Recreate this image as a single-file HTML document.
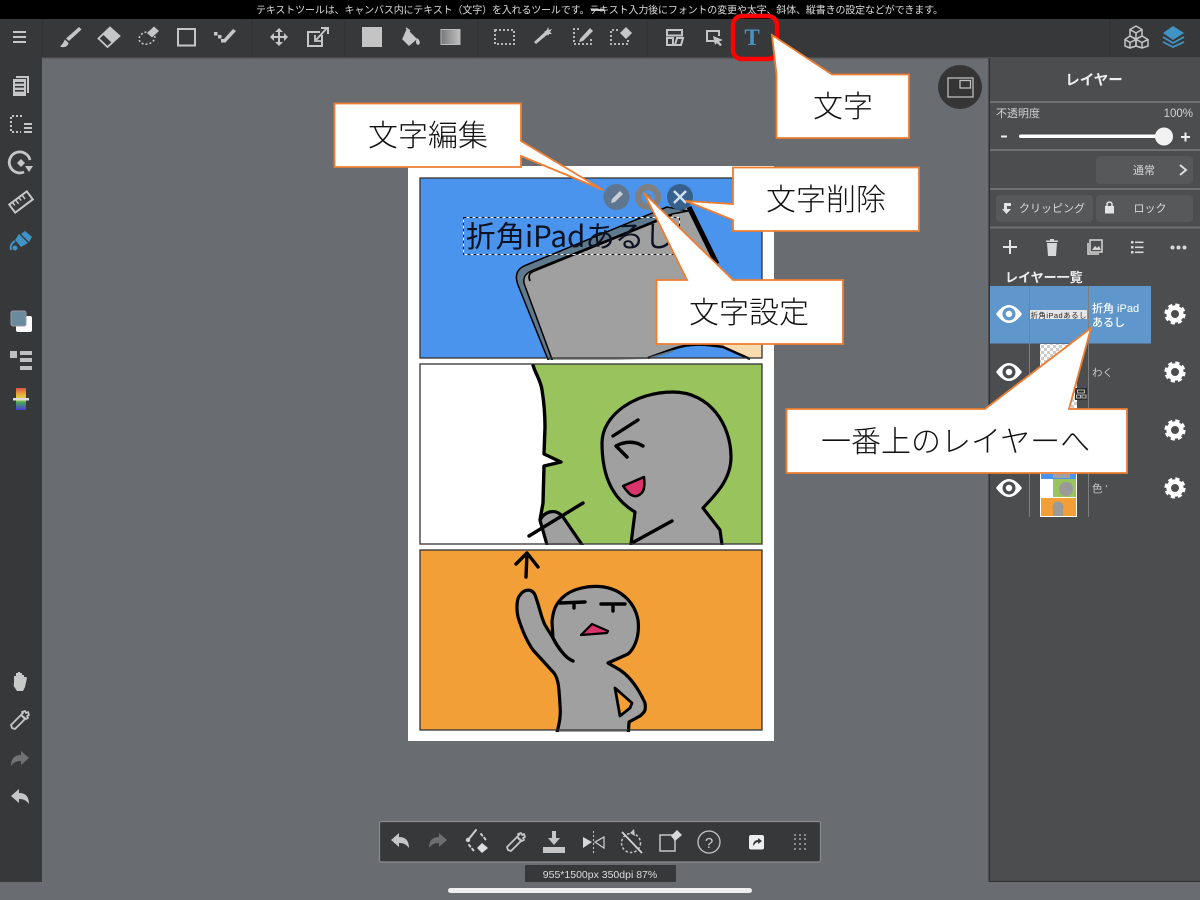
<!DOCTYPE html>
<html lang="ja"><head><meta charset="utf-8"><title>Text tool</title>
<style>
html,body{margin:0;padding:0;background:#696c71;width:1200px;height:900px;overflow:hidden}
svg{display:block;font-family:"Liberation Sans","Noto Sans CJK JP",sans-serif}
.co{fill:#fff;stroke:#ed7d31;stroke-width:1.8;stroke-linejoin:miter}
.cot{font-family:"Noto Sans CJK JP",sans-serif;font-size:30px;font-weight:300;fill:#111}
.i{fill:none;stroke:#c6c6c6;stroke-width:2}
.f{fill:#c6c6c6}
.ink{fill:none;stroke:#000;stroke-width:3.4;stroke-linecap:round;stroke-linejoin:round}
.fg{fill:#a0a0a0;stroke:#000;stroke-width:3.2;stroke-linejoin:round;stroke-linecap:round}
.sep{stroke:#6f7072;stroke-width:2}
.pt{fill:#d8d8d8;font-size:11px}
</style></head><body>
<svg width="1200" height="900" viewBox="0 0 1200 900" xmlns="http://www.w3.org/2000/svg">
<defs>
<g id="eye"><path d="M-13 0Q0-18 13 0Q0 18-13 0Z" fill="#fff"/><circle r="6.5" fill="currentColor"/><circle r="3.2" fill="#fff"/></g>
<g id="gear"><circle r="6.3" fill="none" stroke="#fff" stroke-width="4.6"/><circle r="9" fill="none" stroke="#fff" stroke-width="3.2" stroke-dasharray="4.07 3"/></g>
<path id="undo" d="M-9-1L-1-8V-4C6-4 9 0 9 7C6 3 3 2-1 2V6Z"/>
<path id="drop" d="M-8 8L-9 5L1-5L5-1L-5 9ZM1-5L3-7L2-8L5-9L6-7L8-8L9-5L7-4L8-2L6-1Z" fill="none" stroke-width="1.8" stroke-linejoin="round"/>
<clipPath id="p1"><rect x="420" y="178" width="342" height="182"/></clipPath>
<clipPath id="p2"><rect x="420" y="364" width="342" height="181"/></clipPath>
<clipPath id="p3"><rect x="420" y="550" width="342" height="182"/></clipPath>
</defs>

<rect width="1200" height="900" fill="#696c71"/>
<!-- top -->
<rect width="1200" height="19" fill="#000"/>
<text x="256" y="13.5" font-size="10" fill="#dcdcdc" textLength="687" lengthAdjust="spacing" font-family="'Noto Sans CJK JP',sans-serif">テキストツールは、キャンバス内にテキスト（文字）を入れるツールです。テキスト入力後にフォントの変更や太字、斜体、縦書きの設定などができます。</text>
<line x1="591" y1="10" x2="604" y2="10" stroke="#ccc" stroke-width="2"/>
<rect y="19" width="1200" height="39" fill="#37383a"/>
<rect y="57" width="1200" height="1.500" fill="#4a4b4d"/>
<rect y="19" width="42" height="863" fill="#37383a"/>
<rect x="42" y="19" width="0.800" height="38" fill="#303133"/>
<g stroke="#303133"><line x1="252" y1="19" x2="252" y2="57"/><line x1="345" y1="19" x2="345" y2="57"/><line x1="478" y1="19" x2="478" y2="57"/><line x1="647" y1="19" x2="647" y2="57"/><line x1="1110" y1="19" x2="1110" y2="57"/></g>

<!-- toolbar icons -->
<g fill="#c6c6c6" stroke="none">
<rect x="13" y="31" width="13" height="2"/><rect x="13" y="36" width="13" height="2"/><rect x="13" y="41" width="13" height="2"/>
<path d="M79 27L81.500 29.500L69 41L66 38.500Z"/><path d="M65 39.500L68.500 43C68 47 63 48 60 46.500C62 45 63 43 65 39.500Z"/>
</g>
<path d="M110 27.500L119.500 36L107.500 47L98.500 38.500Z" fill="none" stroke="#c6c6c6" stroke-width="1.800"/>
<path d="M110 27.500L119.500 36L112 43L103 34.500Z" fill="#c6c6c6"/>
<g fill="none" stroke="#c6c6c6" stroke-width="1.600">
<ellipse cx="147" cy="38" rx="8" ry="6" stroke-dasharray="2 2" transform="rotate(-15 147 38)"/>
<rect x="178" y="29" width="17" height="16.500" stroke-width="2"/>
</g>
<path d="M147 33L154 26.500L159 31L152 37.500Z" fill="#c6c6c6"/>
<g fill="#c6c6c6">
<rect x="214" y="32" width="3.500" height="3.500"/><rect x="218" y="35" width="3.500" height="3.500"/><rect x="221" y="39" width="3.500" height="3.500"/>
<path d="M225 43L223 40L233 29L236 31Z"/>
<path d="M279 28L283 32H280V36H284V33L288 37L284 41V38H280V42H283L279 46L275 42H278V38H274V41L270 37L274 33V36H278V32H275Z"/>
</g>
<g fill="none" stroke="#c6c6c6" stroke-width="2">
<path d="M320 32H308V46H322V35"/><path d="M316 40L327 28M321 28H328V34"/><path d="M315 35V41H321" stroke-width="1.800"/>
</g>
<rect x="362" y="27" width="20" height="20" fill="#c4c4c4"/>
<path d="M407 30L416 39L409 45L403 39ZM406 28L410 31" fill="#c6c6c6" stroke="#c6c6c6" stroke-width="1.500" stroke-linejoin="round"/>
<path d="M417 38C420 40 421 44 418 45C415 44 416 40 417 38Z" fill="#c6c6c6"/>
<defs><linearGradient id="gr"><stop offset="0" stop-color="#777"/><stop offset="1" stop-color="#c0c0c0"/></linearGradient></defs>
<rect x="441" y="29.500" width="19" height="15" fill="url(#gr)" stroke="#bbb"/>
<g fill="none" stroke="#c6c6c6" stroke-width="1.800" stroke-dasharray="2 2">
<rect x="495" y="30" width="19" height="14"/>
<path d="M579 29H574V44H591V38"/>
<path d="M618 30H611V44H628V40"/>
</g>
<g fill="#c6c6c6">
<path d="M536 44L534 42L546 31L548 34Z"/>
<path d="M548 27L549 30L552 29L550 32L552 34L549 34L548 36L547 33L544 32L547 30Z"/>
<path d="M580 39L590 28L593 31L583 41L579 42Z"/>
<path d="M620 33L626 27L632 33L626 39Z"/>
</g>
<g fill="none" stroke="#c6c6c6" stroke-width="2">
<rect x="667" y="30" width="15" height="5.500"/><path d="M667 38H673V45H667ZM677 38H683L681 45H675Z"/>
<path d="M719 41H707V31H719V36"/>
</g>
<path d="M713 36L723 40L719 41.500L722 45L720 46L717 43L715 45Z" fill="#c6c6c6"/>
<text x="752" y="45" text-anchor="middle" font-family="'Liberation Serif',serif" font-weight="bold" font-size="23" fill="#4a92c0">T</text>
<rect x="733" y="16" width="44" height="43" rx="9" fill="none" stroke="#f00" stroke-width="4.500"/>

<g fill="none" stroke="#c6c6c6" stroke-width="1.500" stroke-linejoin="round">
<path d="M1136 26L1142 29.500V36L1136 39L1130 36V29.500ZM1130 29.500L1136 33L1142 29.500M1136 33V39"/>
<path d="M1130 36L1136 39.500V46L1130 48L1125 46V39.500ZM1125 39.500L1130 42.500L1136 39.500M1130 42.500V48"/>
<path d="M1142 36L1148 39.500V46L1142 48L1136 46V39.500ZM1136 39.500L1142 42.500L1148 39.500M1142 42.500V48"/>
</g>
<path d="M1173 26L1184 33L1173 40L1163 33Z" fill="#3f94c5"/>
<path d="M1163 37L1173 43L1184 37M1163 42L1173 47L1184 42" fill="none" stroke="#3f94c5" stroke-width="1.800"/>

<!-- left icons -->
<g fill="#c6c6c6">
<rect x="13" y="79" width="13" height="17"/>
<path d="M16 76H29V93H27V78H16Z"/>
<rect x="15" y="82" width="9" height="1.600" fill="#37383a"/><rect x="15" y="86" width="9" height="1.600" fill="#37383a"/><rect x="15" y="90" width="9" height="1.600" fill="#37383a"/>
<rect x="24" y="123" width="8" height="2"/><rect x="24" y="127" width="8" height="2"/><rect x="24" y="131" width="8" height="2"/>
</g>
<path d="M22 116H11V132H21" fill="none" stroke="#c6c6c6" stroke-width="2" stroke-dasharray="2 2"/>
<path d="M24 172A10.500 10.500 0 1 1 30 160" fill="none" stroke="#c6c6c6" stroke-width="2.800"/>
<path d="M25 166H33L29 172Z" fill="#c6c6c6"/>
<path d="M21 155L25 159L21 163L17 159Z" transform="translate(0,4)" fill="#c6c6c6"/>
<g transform="rotate(-37 21 202)"><rect x="10" y="197" width="22" height="10" fill="none" stroke="#c6c6c6" stroke-width="2"/><path d="M14 197V201M18 197V202M22 197V201M26 197V202" stroke="#c6c6c6" stroke-width="1.500"/></g>
<path d="M19 234L28 243L21 247L15 240ZM25 231L32 237L29 242L21 234Z" fill="#3f94c5"/>
<path d="M15 241C12 243 10 245 11 250" fill="none" stroke="#3f94c5" stroke-width="2"/>
<circle cx="15" cy="248" r="2.500" fill="#3f94c5"/>
<rect x="16" y="316" width="16" height="16" rx="2" fill="#fff"/>
<rect x="11" y="311" width="15" height="15" rx="2" fill="#6a8a9e" stroke="#99a" stroke-width="1"/>
<g fill="#c0c0c0"><rect x="10" y="351" width="7" height="7"/><rect x="20" y="351" width="12" height="4"/><rect x="20" y="358" width="12" height="4"/><rect x="20" y="366" width="12" height="4"/></g>
<defs><linearGradient id="rb" x1="0" x2="0" y1="0" y2="1"><stop offset="0" stop-color="#d8534a"/><stop offset=".25" stop-color="#e8a23a"/><stop offset=".5" stop-color="#d8d84a"/><stop offset=".65" stop-color="#4aa85a"/><stop offset="1" stop-color="#4a3ad8"/></linearGradient></defs>
<rect x="16" y="388" width="10" height="22" fill="url(#rb)"/>
<rect x="13" y="398" width="16" height="2.500" fill="#ddd"/>
<path d="M11 682L14 686V676H16V673H18V672H20V673H22V675H24V677H26L27 678L25 687L23 691H17Z" fill="#c9c9c9"/>
<use href="#drop" x="20" y="720" stroke="#c6c6c6"/>
<use href="#undo" transform="translate(20 759) scale(-1 1)" fill="#707173"/>
<use href="#undo" x="20" y="797" fill="#c6c6c6"/>

<!-- page -->
<rect x="408" y="166" width="366" height="575" fill="#fff"/>
<!-- panel 1 -->
<rect x="420" y="178" width="342" height="180" fill="#4a94ee"/>
<g clip-path="url(#p1)">
<path d="M720 345L726 330L762 335V358H745Z" fill="#f8dcb0"/>
<path d="M552 362L519 286C516 277 519 270 526 267L667 209L688 207L699 228L717 263L735 320L723 347C705 344 685 345 673 349L648 359Z" fill="#a0a0a0"/>
<path d="M553 362L525 286C522 279 525 274 531 271L672 214L688 211L667 207L524 266C516 270 515 277 518 285L549 362Z" fill="#5f7a8c" stroke="#000" stroke-width="1.500" stroke-linejoin="round"/>
<path d="M530 281C528 276 529 273 534 271L672 215" fill="none" stroke="#000" stroke-width="1.800"/>
<path d="M689 207L717 264" fill="none" stroke="#000" stroke-width="5"/>
<path d="M648 358L673 349C690 343 705 344 723 347L750 359" fill="none" stroke="#000" stroke-width="2.500"/>
<path d="M650 358L673 351" stroke="#5f7a8c" stroke-width="2"/>
</g>
<rect x="420" y="178" width="342" height="180" fill="none" stroke="#333" stroke-width="1.300"/>
<text x="466" y="247" font-size="29.500" fill="#0c1222" font-family="'Noto Sans CJK JP',sans-serif" font-weight="400">折角iPadあるし</text>
<rect x="463.500" y="217.500" width="216" height="37" fill="none" stroke="#fff"/>
<rect x="463.500" y="217.500" width="216" height="37" fill="none" stroke="#111" stroke-dasharray="3 3"/>
<circle cx="616.500" cy="197" r="13" fill="#5f7690"/>
<path d="M611 203L612 199L620 191L623 194L615 202Z" fill="#c9ced5"/>
<circle cx="648" cy="197" r="13" fill="#808080"/>
<circle cx="648" cy="197" r="5" fill="none" stroke="#4a94ee" stroke-width="3.500"/>
<circle cx="680" cy="197" r="13" fill="#38608c"/>
<path d="M674 191L686 203M686 191L674 203" stroke="#cfe0f0" stroke-width="2.500"/>

<!-- panel 2 -->
<rect x="420" y="364" width="342" height="180" fill="#98c35d"/>
<path d="M420 364H533C535 373 541 381 542 390C544 402 545 415 545 427L544 454L561 462L544 466L543 503L540 520L547 544H420Z" fill="#fff"/>
<g clip-path="url(#p2)">
<path class="ink" d="M533 365C535 373 541 381 542 390C544 402 545 415 545 427L544 454L561 462L544 466L543 503L540 520L547 543"/>
<path class="fg" d="M723 552L720 530L703 508C715 495 731 480 731 457C731 425 710 392 673 392C635 392 602 415 602 443C602 480 615 500 635 512L630 552Z"/>
<path class="fg" d="M549 552L540 520C545 511 556 508 563 517L587 552Z"/>
<path class="ink" d="M529 536L583 503M613 436L638 420M643 446C635 441 625 441 616 446L627 457M632 543L672 521" stroke-width="3"/>
<path d="M623 486L644 477C645 486 645 493 637 496C630 497 627 491 623 486Z" fill="#d8336a" stroke="#000" stroke-width="2.500" stroke-linejoin="round"/>
</g>
<rect x="420" y="364" width="342" height="180" fill="none" stroke="#333" stroke-width="1.300"/>

<!-- panel 3 -->
<rect x="420" y="550" width="342" height="180" fill="#f39f37"/>
<g clip-path="url(#p3)">
<path class="fg" d="M555 740C560 722 561 715 560 705C559 690 559 680 554 673L533 650C526 640 522 630 518 617C516 608 517 598 520 595C524 589 532 588 535 595C539 605 541 617 545 625L553 638L552 622C553 610 556 604 562 598C572 588 590 585 604 587C622 590 635 603 638 620C640 635 635 648 628 654L608 663L620 670C632 678 640 692 645 703C646 710 645 712 640 716L629 722L628 740Z"/>
</g>
<path class="ink" d="M526 577L527 553M516 564L527 553L538 567M553 638C557 646 565 658 573 661" stroke-width="3"/>
<path d="M615 688L632 703L630 708L620 716Z" fill="#f39f37" stroke="#000" stroke-width="2.800" stroke-linejoin="round"/>
<path class="ink" d="M560 603L585 602M574 603V608M601 604L625 604M613 605V611" stroke-width="2.500"/>
<path d="M581 635L592 624L608 631L607 633Z" fill="#d8336a" stroke="#000" stroke-width="2.200" stroke-linejoin="round"/>
<rect x="420" y="550" width="342" height="180" fill="none" stroke="#333" stroke-width="1.300"/>

<!-- nav -->
<circle cx="960" cy="87" r="22" fill="#353535"/>
<rect x="948" y="78" width="25" height="19" fill="none" stroke="#bdbdbd" stroke-width="1.300"/>
<rect x="960" y="80.500" width="10.500" height="7.500" fill="none" stroke="#bdbdbd" stroke-width="1.300"/>

<!-- right panel -->
<rect x="989" y="58" width="211" height="824" fill="#4c4d4f"/>
<rect x="988.500" y="58" width="1.500" height="824" fill="#2f3032"/>
<rect x="989" y="881" width="211" height="1" fill="#2f3032"/>
<text x="1094" y="85" text-anchor="middle" font-size="14.500" font-weight="bold" fill="#eee">レイヤー</text>
<g class="sep"><line x1="990" y1="102" x2="1200" y2="102"/><line x1="990" y1="150" x2="1200" y2="150"/><line x1="990" y1="189" x2="1200" y2="189"/><line x1="990" y1="227.500" x2="1200" y2="227.500"/></g>
<text x="996" y="117" font-size="11" fill="#d2d2d2">不透明度</text>
<text x="1193" y="117" text-anchor="end" font-size="11.500" fill="#d2d2d2">100%</text>
<rect x="1019" y="134.500" width="146" height="3.500" rx="1.700" fill="#fff"/>
<circle cx="1164" cy="136.500" r="9" fill="#f2f2f2"/>
<rect x="1001" y="135.500" width="6" height="2" fill="#eee"/>
<path d="M1181 137H1190M1185.500 132.500V141.500" stroke="#eee" stroke-width="2"/>
<rect x="1096" y="156" width="97" height="28" rx="4" fill="#575859"/>
<text x="1144" y="174" text-anchor="middle" class="pt" font-size="11">通常</text>
<path d="M1180 165L1186 170L1180 175" fill="none" stroke="#ddd" stroke-width="2"/>
<rect x="996" y="195" width="97" height="27" rx="4" fill="#575859"/>
<rect x="1096" y="195" width="97" height="27" rx="4" fill="#575859"/>
<path d="M1004 203H1011V206H1007V209H1011L1006.500 214L1002 209H1004Z" fill="#e4e4e4"/>
<text x="1019" y="212" font-size="11" fill="#d8d8d8">クリッピング</text>
<rect x="1105" y="206" width="9" height="7.500" fill="#e4e4e4"/>
<path d="M1107 206V204C1107 201.500 1112 201.500 1112 204V206" fill="none" stroke="#e4e4e4" stroke-width="1.500"/>
<text x="1150" y="212" text-anchor="middle" font-size="11" fill="#d8d8d8">ロック</text>

<path d="M1003 247H1017M1010 240V254" stroke="#e6e6e6" stroke-width="2"/>
<path d="M1047 243H1057L1056 256H1048Z M1046 240.500H1058V242H1046Z M1050 239H1054V240.500H1050Z" fill="#d8d8d8"/>
<g fill="none" stroke="#d8d8d8" stroke-width="1.500"><rect x="1090" y="240" width="12" height="12"/><path d="M1088 243V254H1099"/></g>
<path d="M1092 250L1095 246L1097 248L1099 246L1101 250Z" fill="#d8d8d8"/>
<g fill="#d8d8d8"><rect x="1131" y="241" width="2.500" height="2.500"/><rect x="1131" y="246" width="2.500" height="2.500"/><rect x="1131" y="251" width="2.500" height="2.500"/><rect x="1135" y="241.500" width="8.500" height="1.600"/><rect x="1135" y="246.500" width="8.500" height="1.600"/><rect x="1135" y="251.500" width="8.500" height="1.600"/>
<circle cx="1172.500" cy="247.500" r="2"/><circle cx="1178.500" cy="247.500" r="2"/><circle cx="1184.500" cy="247.500" r="2"/></g>
<text x="1005" y="282" font-size="13" font-weight="bold" fill="#eee">レイヤー一覧</text>

<!-- layers -->
<rect x="990" y="286" width="161" height="57.500" fill="#5f97cd"/>
<path d="M1029.500 286V517M1088.500 286V517" stroke="#7d7e80" stroke-width="1"/>
<rect x="1030" y="310" width="57" height="9" fill="#e6e6e6"/>
<text x="1058.500" y="318" text-anchor="middle" font-size="7.500" fill="#222" textLength="56">折角iPadあるし</text>
<text x="1092" y="312" font-size="11" fill="#fff" font-weight="500">折角 iPad</text>
<text x="1092" y="326" font-size="11" fill="#fff" font-weight="500">あるし</text>
<g color="#5f97cd"><use href="#eye" x="1009" y="314"/></g>
<g color="#4c4d4f"><use href="#eye" x="1009" y="372"/><use href="#eye" x="1009" y="430"/><use href="#eye" x="1009" y="488"/></g>
<use href="#gear" x="1175" y="314"/><use href="#gear" x="1175" y="372"/><use href="#gear" x="1175" y="430"/><use href="#gear" x="1175" y="488"/>
<defs><pattern id="ck" width="6" height="6" patternUnits="userSpaceOnUse"><rect width="6" height="6" fill="#fff"/><rect width="3" height="3" fill="#ccc"/><rect x="3" y="3" width="3" height="3" fill="#ccc"/></pattern></defs>
<rect x="1040" y="344" width="37" height="66" fill="url(#ck)"/>
<text x="1092" y="376" font-size="10.500" fill="#c8c8c8">わく</text>
<rect x="1075" y="388" width="12" height="12" fill="#2c2c2c"/>
<path d="M1077.500 390H1084.500V393H1077.500ZM1076.500 395H1080.500V398H1076.500ZM1082 395H1086V398H1082Z" fill="none" stroke="#ddd" stroke-width=".8"/>
<rect x="1040" y="473" width="37" height="44" fill="#fff"/>
<rect x="1041" y="474" width="35" height="5" fill="#4a94ee"/><rect x="1053" y="474" width="17" height="4" fill="#a0a0a0"/>
<rect x="1053" y="479" width="23" height="18" fill="#98c35d"/><circle cx="1066" cy="489" r="7" fill="#9a9a9a"/>
<rect x="1041" y="498" width="35" height="18" fill="#f39f37"/><circle cx="1058" cy="507" r="5.500" fill="#9a9a9a"/><rect x="1053" y="510" width="10" height="6" fill="#9a9a9a"/>
<text x="1092" y="492" font-size="10.500" fill="#c8c8c8">色 '</text>

<!-- bottom toolbar -->
<rect x="379.500" y="821.500" width="441" height="40.500" rx="2" fill="#37383a" stroke="#8a8c90" stroke-width="1.200"/>
<use href="#undo" x="400" y="841" fill="#c6c6c6"/>
<use href="#undo" transform="translate(438 841) scale(-1 1)" fill="#6d6e70"/>
<g fill="none" stroke="#d0d0d0" stroke-width="2" stroke-linecap="round"><path d="M468 840L476 830"/><path d="M481 834L486 840" stroke-dasharray="2 3"/><path d="M469 845L474 851" stroke-dasharray="2 3"/></g>
<circle cx="468" cy="840" r="2.200" fill="#d0d0d0"/>
<path d="M482 843L488 848L482 853L477 848Z" fill="#e0e0e0"/>
<use href="#drop" x="516" y="842" stroke="#c6c6c6"/>
<path d="M552 831H556V838H560L554 845L548 838H552Z M543 847H565V853H543Z" fill="#c6c6c6"/>
<path d="M583 837L592 842L583 848Z" fill="#d8d8d8"/><path d="M604 837L595 842L604 848Z" fill="none" stroke="#c6c6c6" stroke-width="1.300"/>
<path d="M593.500 831V853" stroke="#c6c6c6" stroke-dasharray="2 2"/>
<circle cx="631" cy="843" r="9.500" fill="none" stroke="#c6c6c6" stroke-width="1.500" stroke-dasharray="2.500 2"/>
<path d="M622 832L642 853" stroke="#d4d4d4" stroke-width="1.800"/><path d="M634 829L630 833L635 836Z" fill="#c6c6c6"/>
<path d="M674 835H660V851H675V840" fill="none" stroke="#c6c6c6" stroke-width="1.500"/>
<path d="M671 836L677 830L682 835L675 841Z" fill="#d8d8d8"/>
<circle cx="709" cy="842" r="11" fill="none" stroke="#c6c6c6" stroke-width="1.300"/>
<text x="709" y="848" text-anchor="middle" font-size="15" fill="#d0d0d0">?</text>
<rect x="749" y="835" width="15" height="14.500" rx="2" fill="#eee"/>
<path d="M753 846C753 842 755 840 758 840V838L762 841L758 844V842C756 842 755 844 753 846Z" fill="#37383a"/>
<g fill="#a8a8a8"><circle cx="795" cy="835" r="1"/><circle cx="800" cy="835" r="1"/><circle cx="805" cy="835" r="1"/><circle cx="795" cy="839" r="1"/><circle cx="800" cy="839" r="1"/><circle cx="805" cy="839" r="1"/><circle cx="795" cy="844" r="1"/><circle cx="800" cy="844" r="1"/><circle cx="805" cy="844" r="1"/><circle cx="795" cy="849" r="1"/><circle cx="800" cy="849" r="1"/><circle cx="805" cy="849" r="1"/></g>
<rect x="525" y="865" width="151" height="17" rx="1" fill="#37383a"/>
<text x="600" y="878" text-anchor="middle" font-size="10.500" fill="#dcdcdc">955*1500px 350dpi 87%</text>
<rect x="448" y="888" width="304" height="5" rx="2.500" fill="#eee"/>

<!-- callouts -->
<path class="co" d="M334.500 103.500H521V141L603 190L521 156V167H334.500Z"/>
<text class="cot" x="368" y="146">文字編集</text>
<path class="co" d="M776.500 74.500L772 35L832 74.500H909V138H776.500Z"/>
<text class="cot" x="813" y="117">文字</text>
<path class="co" d="M733 167.500H919V231H733V220L686 201L733 204Z"/>
<text class="cot" x="766" y="210">文字削除</text>
<path class="co" d="M656.500 280H687L644 193L733 280H843V344H656.500Z"/>
<text class="cot" x="689" y="323">文字設定</text>
<path class="co" d="M786.500 409H985L1091 328L1069 409H1127V473H786.500Z"/>
<text class="cot" x="821" y="452">一番上のレイヤーへ</text>
</svg>
</body></html>
